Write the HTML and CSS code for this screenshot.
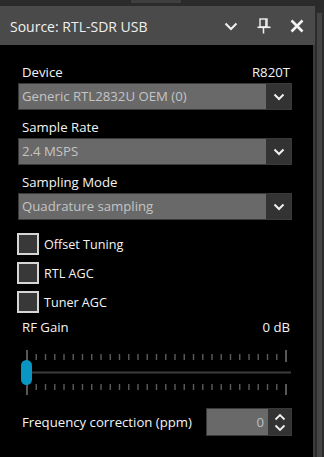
FILE: index.html
```html
<!DOCTYPE html>
<html>
<head>
<meta charset="utf-8">
<link rel="stylesheet" href="styles.css">
</head>
<body>
<div class="topstrip"><div class="toptab"></div></div>
<div class="main">
  <div class="panel">
    <div class="header">
      <span class="title">Source: RTL-SDR USB</span>
      <div class="hicons">
        <svg class="hicon" width="14" height="14" viewBox="0 0 14 14"><polyline points="1.5,4.5 7,10 12.5,4.5" fill="none" stroke="#f0f0f0" stroke-width="2"/></svg>
        <svg class="hicon" width="14" height="16" viewBox="0 0 14 16"><rect x="3" y="1" width="7" height="8" fill="none" stroke="#f0f0f0" stroke-width="1.4"/><line x1="9" y1="1" x2="9" y2="9" stroke="#f0f0f0" stroke-width="1.6"/><line x1="0.5" y1="9.3" x2="13.5" y2="9.3" stroke="#f0f0f0" stroke-width="1.6"/><line x1="6.5" y1="9" x2="6.5" y2="15.5" stroke="#f0f0f0" stroke-width="1.5"/></svg>
        <svg class="hicon" width="14" height="14" viewBox="0 0 14 14"><path d="M1.5 1.5 L12.5 12.5 M12.5 1.5 L1.5 12.5" stroke="#f4f4f4" stroke-width="2.6"/></svg>
      </div>
    </div>
    <div class="content">
      <div class="label-row"><span>Device</span><span>R820T</span></div>
      <div class="combo"><span class="combo-text">Generic RTL2832U OEM (0)</span><span class="combo-btn"><svg width="12" height="8" viewBox="0 0 12 8"><polyline points="1.5,1.5 6,6 10.5,1.5" fill="none" stroke="#f0f0f0" stroke-width="2"/></svg></span></div>
      <div class="label-row gap"><span>Sample Rate</span></div>
      <div class="combo"><span class="combo-text">2.4 MSPS</span><span class="combo-btn"><svg width="12" height="8" viewBox="0 0 12 8"><polyline points="1.5,1.5 6,6 10.5,1.5" fill="none" stroke="#f0f0f0" stroke-width="2"/></svg></span></div>
      <div class="label-row gap"><span>Sampling Mode</span></div>
      <div class="combo"><span class="combo-text">Quadrature sampling</span><span class="combo-btn"><svg width="12" height="8" viewBox="0 0 12 8"><polyline points="1.5,1.5 6,6 10.5,1.5" fill="none" stroke="#f0f0f0" stroke-width="2"/></svg></span></div>
      <div class="checks">
        <label class="check"><span class="box"></span><span>Offset Tuning</span></label>
        <label class="check"><span class="box"></span><span>RTL AGC</span></label>
        <label class="check"><span class="box"></span><span>Tuner AGC</span></label>
      </div>
      <div class="label-row rf"><span>RF Gain</span><span>0 dB</span></div>
      <div class="slider">
        <svg width="274" height="50" viewBox="0 0 274 50" id="slidersvg">
          <line x1="3" y1="24.5" x2="273" y2="24.5" stroke="#3c3c3c" stroke-width="2"/>
          <g id="ticks" stroke="#5c5c5c" stroke-width="1.4"></g>
          <rect x="3" y="12" width="11" height="25" rx="5.5" fill="#0a96c2"/>
        </svg>
      </div>
      <div class="freq-row">
        <span>Frequency correction (ppm)</span>
        <div class="spin">
          <span class="spin-text">0</span>
          <span class="spin-btns">
            <svg width="12" height="8" viewBox="0 0 12 8"><polyline points="1.5,6.5 6,2 10.5,6.5" fill="none" stroke="#f0f0f0" stroke-width="1.8"/></svg>
            <svg width="12" height="8" viewBox="0 0 12 8"><polyline points="1.5,1.5 6,6 10.5,1.5" fill="none" stroke="#f0f0f0" stroke-width="1.8"/></svg>
          </span>
        </div>
      </div>
    </div>
  </div>
  <div class="sidebar"><div class="thumb"></div></div>
</div>
<script>
(function(){
  var g = document.getElementById('ticks');
  var ns = 'http://www.w3.org/2000/svg';
  for (var i = 0; i <= 28; i++) {
    var x = (9 + i * 9.25).toFixed(2);
    var longT = (i === 0 || i === 28);
    var pairs = longT ? [[2, 14], [36, 47]] : [[6, 12], [36, 42]];
    pairs.forEach(function(p){
      var l = document.createElementNS(ns, 'line');
      l.setAttribute('x1', x); l.setAttribute('x2', x);
      l.setAttribute('y1', p[0]); l.setAttribute('y2', p[1]);
      if (longT) { l.setAttribute('stroke', '#6e6e6e'); l.setAttribute('stroke-width', '1.6'); }
      g.appendChild(l);
    });
  }
})();
</script>
</body>
</html>
```

FILE: styles.css
```css
* { box-sizing: border-box; }
html, body {
  margin: 0;
  padding: 0;
}
body {
  width: 324px;
  height: 457px;
  overflow: hidden;
  background: #2b2b2b;
  font-family: "Open Sans", "Noto Sans", sans-serif;
  font-size: 13.2px;
  color: #f4f4f4;
  display: flex;
  flex-direction: column;
}
.topstrip {
  height: 6px;
  flex: none;
  background: #2b2b2b;
}
.toptab {
  margin-left: 131px;
  width: 50px;
  height: 3px;
  background: #3f3f3f;
}
.main {
  flex: 1;
  display: flex;
  min-height: 0;
}
.panel {
  width: 315px;
  display: flex;
  flex-direction: column;
}
.header {
  height: 39px;
  flex: none;
  background: #4a4a4a;
  display: flex;
  align-items: center;
  justify-content: space-between;
  padding-left: 10px;
  padding-right: 11px;
}
.title {
  font-size: 14px;
  color: #f0f0f0;
  margin-top: 1px;
}
.hicons {
  display: flex;
  align-items: center;
  gap: 19px;
}
.hicon { display: block; }
.content {
  flex: 1;
  width: 315px;
  background: #000;
  border-right: 2px solid #3a3a3a;
  padding: 19px 21px 0 18px;
  display: flex;
  flex-direction: column;
}
.label-row {
  height: 16px;
  line-height: 16px;
  display: flex;
  justify-content: space-between;
  padding-left: 4px;
  padding-right: 2px;
  white-space: nowrap;
}
.label-row.gap { margin-top: 9px; }
.label-row.rf { margin-top: 6px; }
.combo {
  margin-top: 3px;
  height: 27px;
  display: flex;
  border: 1px solid #3a3a3a;
  background: #696969;
}
.combo-text {
  flex: 1;
  padding-left: 3px;
  line-height: 25px;
  color: #c4c4c4;
  white-space: nowrap;
}
.combo-btn {
  width: 25px;
  background: #333;
  display: flex;
  align-items: center;
  justify-content: center;
}
.combo-btn svg { display: block; }
.checks {
  margin-top: 13px;
  display: flex;
  flex-direction: column;
  gap: 7px;
  margin-left: -1px;
  font-size: 12.6px;
}
.check {
  height: 22px;
  display: flex;
  align-items: center;
  gap: 5px;
}
.box {
  width: 22px;
  height: 22px;
  border: 2px solid #d6d6d6;
  background: #383838;
}
.slider {
  margin-top: 13px;
  height: 50px;
}
.slider svg { display: block; }
.freq-row {
  margin-top: 10px;
  height: 28px;
  display: flex;
  align-items: center;
  justify-content: space-between;
  padding-left: 4px;
}
.spin {
  width: 86px;
  height: 28px;
  display: flex;
  border: 1px solid #3a3a3a;
  background: #696969;
}
.spin-text {
  flex: 1;
  text-align: right;
  padding-right: 4px;
  line-height: 26px;
  color: #b8c0c8;
}
.spin-btns {
  width: 23px;
  background: #333;
  display: flex;
  flex-direction: column;
  align-items: center;
  justify-content: center;
  gap: 3px;
}
.spin-btns svg { display: block; }
.sidebar {
  width: 9px;
  background: #2b2b2b;
  padding-top: 7px;
  padding-left: 2px;
  padding-right: 2px;
}
.thumb {
  height: 100%;
  background: #444;
}
```
